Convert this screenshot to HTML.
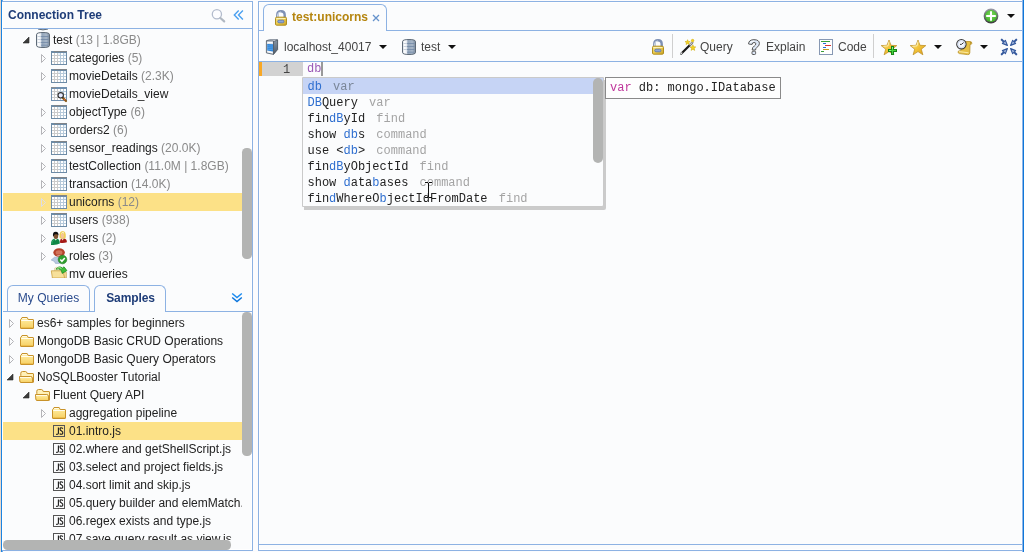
<!DOCTYPE html>
<html><head><meta charset="utf-8">
<style>
*{box-sizing:border-box;margin:0;padding:0}
html,body{width:1024px;height:552px;overflow:hidden;background:#fff;font-family:"Liberation Sans",sans-serif;font-size:12px;color:#222}
.abs{position:absolute}
#bg{left:0;top:0;width:1024px;height:552px;background:#fcfcfe}
#win-l{left:0;top:0;width:3px;height:552px;background:linear-gradient(90deg,#e8d8cc 0,#e8d8cc 1px,#1c84e0 1px,#1c84e0 2px,#6aaae9 2px)}
#win-r{left:1022px;top:0;width:2px;height:552px;background:linear-gradient(90deg,#8fb4e8 0,#8fb4e8 1px,#0f78d8 1px)}
.panel{border:1px solid #8db2e3;background:#fbfcfd;box-shadow:inset 0 0 0 1px #fff}
#lp{left:2px;top:1px;width:251px;height:550px;border-left:none}
#rp{left:258px;top:1px;width:764px;height:550px;border-right:none}
#lp-hline{left:3px;top:28px;width:249px;height:1px;background:#8db2e3}
#lp-title{left:8px;top:8px;font-weight:bold;font-size:12px;color:#1f3d78;white-space:nowrap;line-height:15px}
.clip{position:absolute;overflow:hidden}
.row{position:absolute;left:0;height:18px;width:242px;white-space:nowrap;line-height:18px;font-size:12px;color:#222}
.row.sel{background:#fce187}
.row .t{position:absolute;top:0}
.row .g{color:#8a8a8a}
.tr{position:absolute;top:5px;width:6px;height:10px;background:none}
.row.sel .tr path{stroke:#dcdce6}
.td{position:absolute;top:6px;width:7px;height:7px}
.ico{position:absolute;top:1px;width:16px;height:16px;overflow:visible}
.mono{font-family:"Liberation Mono",monospace}
.sb{position:absolute;background:#b3b4b3;border-radius:4.5px}
.tab{position:absolute;border:1px solid #8db2e3;border-bottom:none;border-radius:6px 6px 0 0;background:#fbfcfd;white-space:nowrap;text-align:center}
</style></head><body>
<svg width="0" height="0" style="position:absolute">
<defs>
<linearGradient id="gdb" x1="0" x2="1" y1="0" y2="0"><stop offset="0" stop-color="#b9c4d0"/><stop offset=".12" stop-color="#ffffff"/><stop offset=".3" stop-color="#eef2f7"/><stop offset=".42" stop-color="#93a5ba"/><stop offset=".75" stop-color="#a9b8c9"/><stop offset="1" stop-color="#7b8b9f"/></linearGradient>
<linearGradient id="gfold" x1="0" x2="0" y1="0" y2="1"><stop offset="0" stop-color="#fff3c0"/><stop offset=".35" stop-color="#fde58f"/><stop offset="1" stop-color="#f6cf63"/></linearGradient>
<linearGradient id="glock" x1="0" x2="1" y1="0" y2="1"><stop offset="0" stop-color="#f7e58a"/><stop offset=".5" stop-color="#e9c94c"/><stop offset="1" stop-color="#c9a227"/></linearGradient>
<linearGradient id="gstar" x1="0" x2="1" y1="0" y2="1"><stop offset="0" stop-color="#fff2a8"/><stop offset=".5" stop-color="#f3c53a"/><stop offset="1" stop-color="#d99a1c"/></linearGradient>
<radialGradient id="gplus" cx=".5" cy=".4" r=".6"><stop offset="0" stop-color="#7fdc5c"/><stop offset="1" stop-color="#3fae2a"/></radialGradient>
<linearGradient id="gsrv" x1="0" x2="0" y1="0" y2="1"><stop offset="0" stop-color="#8796a6"/><stop offset="1" stop-color="#4e5b69"/></linearGradient>
<linearGradient id="gring" x1="0" x2="0" y1="0" y2="1"><stop offset="0" stop-color="#9a9aa8"/><stop offset="1" stop-color="#3c3c3c"/></linearGradient>

<symbol id="i-db" viewBox="0 0 16 16" overflow="visible">
<path d="M1.5 2.6Q1.5 .5 8 .5Q14.5 .5 14.5 2.6V13.4Q14.5 15.5 8 15.5Q1.5 15.5 1.5 13.4Z" fill="url(#gdb)" stroke="#5e6a77"/>
<path d="M6 4.5H13.5M6 7.5H13.5M6 10.5H13.5M6 13.2H13" stroke="#6f86a5" stroke-width="1" opacity=".75"/>
<path d="M2.5 4.5H6M2.5 7.5H6M2.5 10.5H6" stroke="#c9d2dd" stroke-width="1"/>
</symbol>

<symbol id="i-col" viewBox="0 0 16 16" overflow="visible">
<rect x="0" y="1" width="16" height="14" fill="#6d8ba6"/>
<rect x="3" y="1" width="13" height="1" fill="#808488"/>
<rect x="1" y="3" width="14" height="11" fill="#fff"/>
<path d="M3.5 3V14M6.5 3V14M1 5.5H8M1 8.5H8M1 11.5H8" stroke="#cbcbcb"/>
<path d="M9.5 3V14M12.5 3V14M8 5.5H15M8 8.5H15M8 11.5H15" stroke="#b5c9da"/>
<rect x="7" y="3" width="2" height="2" fill="#e4f0fa"/><rect x="13" y="3" width="2" height="2" fill="#e4f0fa"/>
</symbol>

<symbol id="i-view" viewBox="0 0 16 16" overflow="visible">
<rect x="0" y="1" width="16" height="14" fill="#7090b0"/>
<rect x="0" y="1" width="5" height="1" fill="#888c90"/>
<rect x="1" y="3" width="14" height="11" fill="#fff"/>
<path d="M3.5 3V14M6.5 3V14M1 5.5H8M1 8.5H8M1 11.5H8" stroke="#cbcbcb"/>
<path d="M9.5 3V14M12.5 3V14M8 5.5H15M8 8.5H15M8 11.5H15" stroke="#b5c9da"/>
<path d="M11.6 11.6L15 15" stroke="#8a5a18" stroke-width="2.2" stroke-linecap="round"/>
<circle cx="13.6" cy="13.6" r=".8" fill="#e0603a"/>
<circle cx="9.7" cy="9.3" r="2.7" fill="#e6ebff" stroke="#303030" stroke-width="1.1"/>
</symbol>

<symbol id="i-users" viewBox="0 0 16 16" overflow="visible">
<path d="M9 12.8Q8.8 9 10.8 8.5H13.4Q15.9 9 15.9 12.2Q13 13.4 9 12.8Z" fill="#a51a16"/>
<path d="M10.4 8.6L11.6 10.6L12.9 8.6Z" fill="#f6e6d8"/>
<path d="M8.5 7.2Q8 1 11.7 1Q15.2 1 14.8 7Q14.8 8.8 13 8.6H10.2Q8.6 8.8 8.5 7.2Z" fill="#efcf58"/>
<ellipse cx="11.4" cy="5.8" rx="1.6" ry="2.3" fill="#f4c49a"/>
<path d="M10.4 3.4Q11.6 1.4 13 3.2" fill="none" stroke="#fffbe0" stroke-width="1"/>
<path d="M0 14.9Q-.2 9.4 3 8.7H6.2Q8.9 9.3 8.8 13.6Q6 15.3 0 14.9Z" fill="#0f8646"/>
<path d="M0.8 14.2Q0.8 10.4 3.2 9.6" fill="none" stroke="#35b070" stroke-width=".8"/>
<path d="M3.2 8.7L4.7 10.5L6.2 8.7Z" fill="#e8f0e8"/>
<ellipse cx="4.9" cy="6" rx="2.3" ry="2.9" fill="#7d5230"/>
<path d="M2 6.2Q1.4 1.8 4.8 1.8Q7.8 1.8 7.5 5.6Q6.4 3.9 4.8 4.3Q3 4.1 2.6 6.4Z" fill="#101010"/>
</symbol>

<symbol id="i-roles" viewBox="0 0 16 16" overflow="visible">
<path d="M.2 12L3.6 9.2H8.5V15.4H4.4L3.4 13.4Z" fill="#b9c9e0" stroke="#8fa5c4" stroke-width=".6"/>
<ellipse cx="8.1" cy="4.5" rx="5.8" ry="4.3" fill="#b4412b"/>
<ellipse cx="8" cy="4.4" rx="3.4" ry="2.2" fill="#d0735a"/>
<path d="M5 6.4Q8 8.2 11 6.4Q8 9.6 5 6.4Z" fill="#e9c3ae"/>
<circle cx="11.5" cy="11.5" r="4.3" fill="#2f9e2f" stroke="#1f7a1f" stroke-width=".6"/>
<path d="M9.3 11.6L10.9 13.3L13.8 9.9" fill="none" stroke="#fff" stroke-width="1.5"/>
</symbol>

<symbol id="i-myq" viewBox="0 0 16 16" overflow="visible">
<path d="M3.6 5V2.2Q5.6 .4 8.6 2V5Z" fill="#f7f0d2" stroke="#d2c08a" stroke-width=".6"/>
<path d="M12 12V6.2H15.4V12Z" fill="#f3dc96" stroke="#c9a85a" stroke-width=".7"/>
<path d="M1.4 12L.3 4.8H10.6L12.6 7.4L13.6 12Z" fill="#f7e09a" stroke="#c9a040" stroke-width=".8"/>
<path d="M5 3.2Q8 -.8 11.6 2.1L13 .8L15.9 4.6L11.2 7.4L10.4 4.4Q8 2 5 3.2Z" fill="#3fc03a" stroke="#1f8a22" stroke-width=".8"/>
<path d="M6.3 2.3Q8.4 .8 10.4 2.4" fill="none" stroke="#b8f0a0" stroke-width=".9"/>
</symbol>

<symbol id="i-fold" viewBox="0 0 16 16" overflow="visible">
<path d="M.5 13V5Q.5 4.3 1.2 4L2 2.5H7.2L8.2 4.5H13Q13.5 4.5 13.5 5V13Q13.5 13.5 13 13.5H1Q.5 13.5 .5 13Z" fill="url(#gfold)" stroke="#c8922a"/>
<path d="M2.4 3.5H6.8" stroke="#fffbe6"/>
<path d="M1.2 5.5H12.8" stroke="#fffdf0"/>
<path d="M1 12.5H13" stroke="#eec04e"/>
</symbol>

<symbol id="i-fopen" viewBox="0 0 16 16" overflow="visible">
<path d="M.8 6.5V4.2Q.8 2.5 2.5 2.5H5.6Q6.8 2.5 7.2 4.5H13Q13.5 4.5 13.5 5V13.2H.8Z" fill="#fff1b8" stroke="#c8922a"/>
<path d="M-.5 7.5H10.8Q12.3 7.5 12.4 9L12.6 13.5H1Q0 13.5 -.2 12Z" fill="url(#gfold)" stroke="#c8922a"/>
<path d="M0 8.5H11" stroke="#fffbe6"/>
</symbol>

<symbol id="i-js" viewBox="0 0 16 16" overflow="visible">
<rect x="1.5" y="2.5" width="11" height="11" fill="none" stroke="#555" />
<path d="M6.4 4.6V10Q6.4 11.6 4.2 11.4" fill="none" stroke="#1a1a1a" stroke-width="1.1"/>
<path d="M11 5.4Q8 4 8 6Q8 7.3 9.6 8Q11.2 8.8 10.8 10.3Q10 12 7.6 10.8" fill="none" stroke="#1a1a1a" stroke-width="1.1"/>
</symbol>

<symbol id="i-lock" viewBox="0 0 16 16" overflow="visible">
<path d="M4.3 8V5Q4.3 1.2 8 1.2Q11.7 1.2 11.7 5V8" fill="none" stroke="#7d90b4" stroke-width="2.4"/>
<path d="M4.6 8V5Q4.6 2 8 2" fill="none" stroke="#dfe6f2" stroke-width=".9"/>
<rect x="2.5" y="7.2" width="11" height="8" rx="1.2" fill="url(#glock)" stroke="#b18e1d"/>
<path d="M3.5 8.5H12.5" stroke="#fdf3b8"/>
<rect x="4.7" y="10.2" width="6.2" height="2.6" rx="1.3" fill="#8ea6d6" stroke="#5d7bb8" stroke-width=".9"/>
</symbol>

<symbol id="i-server" viewBox="0 0 16 16" overflow="visible">
<path d="M9.5 2.4L13.6 1V10.6L9.5 15.4Z" fill="url(#gsrv)" stroke="#3f4953" stroke-width=".8"/>
<path d="M2.4 1.8L5.6 .5H13.6L9.5 2.4Z" fill="#e9eff7" stroke="#6b7682" stroke-width=".7"/>
<path d="M2.4 1.9H9.5V15.4L2.4 13.9Z" fill="#dfe5ec" stroke="#48525d" stroke-width=".8"/>
<path d="M3.2 5L9 5.2V12.4L3.2 11.4Z" fill="#2b82d8"/>
<path d="M3.2 6.8L9 7.1M3.2 8.6L9 9M3.2 10.2L9 10.8" stroke="#6db4f0" stroke-width=".6"/>
<path d="M3.6 3.5H8.4" stroke="#fff" stroke-width="1.2"/>
<path d="M3.6 12.6L8.4 13.6" stroke="#fff" stroke-width="1"/>
</symbol>

<symbol id="i-wand" viewBox="0 0 16 16" overflow="visible">
<path d="M.9 14.9L12.4 3.6" stroke="#111" stroke-width="2.1"/>
<path d="M.6 15.2L2.3 13.5M9.6 6.4L12.6 3.4" stroke="#fff" stroke-width="1.5"/>
<path d="M.2 15.2L1 16L13.3 3.9L12.5 3.1Z" fill="none" stroke="#333" stroke-width=".5"/>
<path d="M7.6 0.7L8.3 2.4L10.2 2.6L8.7 3.8L9.2 5.6L7.6 4.6L6.0 5.6L6.5 3.8L5.0 2.6L6.9 2.4Z" fill="#f4d21f" stroke="#c9a400" stroke-width=".5"/>
<circle cx="12.6" cy="1.6" r="1.3" fill="#f4d21f" stroke="#c9a400" stroke-width=".5"/>
<path d="M12.9 5.8L13.7 7.8L15.8 7.9L14.2 9.3L14.7 11.4L12.9 10.3L11.1 11.4L11.6 9.3L10.0 7.9L12.1 7.8Z" fill="#f4d21f" stroke="#c9a400" stroke-width=".5"/>
</symbol>

<symbol id="i-q" viewBox="0 0 16 16" overflow="visible">
<path d="M2.6 5Q2.6 .7 8 .7Q13.4 .7 13.4 4.6Q13.4 7 10.6 8.6Q9.6 9.3 9.6 11H6.2Q6 8.4 8.4 6.9Q9.8 6 9.8 4.8Q9.8 3.5 8 3.5Q6.2 3.5 6.1 5.4Z" fill="#dde7f6" stroke="#555" stroke-width="1"/>
<rect x="6" y="12.2" width="3.6" height="3.3" rx="1" fill="#dde7f6" stroke="#555" stroke-width="1"/>
<path d="M4 4.4Q4.6 2 8 2" fill="none" stroke="#fff" stroke-width=".9"/>
</symbol>

<symbol id="i-code" viewBox="0 0 16 16" overflow="visible">
<rect x="1.5" y=".5" width="13" height="15" fill="#fff" stroke="#8798b3"/>
<path d="M3 2.5H12" stroke="#3a9e3a" stroke-width="1"/>
<path d="M5 4.5H8" stroke="#2a6fd6" stroke-width="1"/>
<path d="M7 6.5H13" stroke="#d83434" stroke-width="1"/>
<path d="M5 8.5H8" stroke="#2a6fd6" stroke-width="1"/>
<path d="M5 10.5H11" stroke="#c79a1e" stroke-width="1"/>
<path d="M3 12.5H6" stroke="#3a9e3a" stroke-width="1"/>
</symbol>

<symbol id="i-star" viewBox="0 0 16 16" overflow="visible">
<path d="M8 1L10 6.3L15.8 6.6L11.3 10.2L12.9 15.8L8 12.6L3.1 15.8L4.7 10.2L.2 6.6L6 6.3Z" fill="url(#gstar)" stroke="#b98a1e" stroke-width=".7" stroke-linejoin="round"/>
<path d="M8 2.6L7 6.9L2.6 7.2" fill="none" stroke="#fff6c4" stroke-width=".8"/>
</symbol>

<symbol id="i-starp" viewBox="0 0 16 16" overflow="visible">
<use href="#i-star"/>
<path d="M10 7H13V10H16V13H13V16H10V13H7V10H10Z" fill="#17851a"/>
<path d="M11.5 8V15M8 11.5H15" stroke="#46d63a" stroke-width="1"/>
<path d="M11.5 8V10M8 11.5H10" stroke="#8ef07a" stroke-width="1"/>
</symbol>

<symbol id="i-hist" viewBox="0 0 16 16" overflow="visible">
<path d="M5 2.5H14Q16 2.5 15.8 4.4Q15.6 5.6 14 5.4L13.8 14Q13.6 15.8 11.6 15.6L3.4 14.6Q1.6 14 2.2 12.4Q2.8 11.4 4.4 12L5 11Z" fill="#e6bf45" stroke="#b8902a" stroke-width=".8"/>
<path d="M3 12.6L12.5 13.8" stroke="#fff0b0" stroke-width=".9"/>
<path d="M14 3.2Q15 3.4 14.6 4.6" stroke="#a07a18" stroke-width=".8" fill="none"/>
<circle cx="5.4" cy="5.2" r="4.7" fill="#f4f7fd" stroke="#3b3b3b" stroke-width="1.1"/>
<circle cx="5.4" cy="5.2" r="3.5" fill="none" stroke="#c9d6ee" stroke-width=".8"/>
<path d="M5.4 5.4L7.6 3.6M5.4 5.4H4" stroke="#222" stroke-width=".9"/>
</symbol>

<symbol id="i-coll" viewBox="0 0 16 16" overflow="visible">
<g id="carr"><path d="M.8 .2L3.2 2.6L4.4 1.4L6.4 6.4L1.4 4.4L2.6 3.2L.2 .8Z" fill="#a9bde0" stroke="#34589c" stroke-width="1.15" stroke-linejoin="round"/></g>
<use href="#carr" transform="translate(16,0) scale(-1,1)"/>
<use href="#carr" transform="translate(0,16) scale(1,-1)"/>
<use href="#carr" transform="translate(16,16) scale(-1,-1)"/>
</symbol>

<symbol id="i-plus" viewBox="0 0 16 16" overflow="visible">
<circle cx="8" cy="8" r="7.4" fill="url(#gring)"/>
<circle cx="8" cy="8" r="6" fill="url(#gplus)"/>
<path d="M8 3.2V12.8M3.2 8H12.8" stroke="#fff" stroke-width="2"/>
</symbol>
</defs></svg>
<div id="wrap" style="position:absolute;left:0;top:0;width:1024px;height:552px;will-change:transform">
<div id="bg" class="abs"></div>
<div id="win-l" class="abs"></div>
<div id="lp" class="abs panel"></div>
<div id="lp-hline" class="abs"></div>
<div id="lp-title" class="abs">Connection Tree</div>

<svg class="abs" style="left:210px;top:8px;overflow:visible" width="16" height="16"><circle cx="6.9" cy="6.2" r="4.6" fill="#fdfdff" stroke="#b3bccd" stroke-width="1.3"/><path d="M10.4 10L14.2 13.4" stroke="#b0b8c2" stroke-width="2.2" stroke-linecap="round"/></svg>
<svg class="abs" style="left:233px;top:9px" width="12" height="12"><path d="M5.7 1.4L1.3 5.9L5.7 10.5M9.9 1.4L5.5 5.9L9.9 10.5" fill="none" stroke="#4aa0f0" stroke-width="1.4"/></svg>
<svg class="abs" style="left:231px;top:292px" width="12" height="12"><path d="M1.2 1.5L6 5.5L10.8 1.5" fill="none" stroke="#1c8cf0" stroke-width="1.5"/><path d="M1.2 5.5L6 9.5L10.8 5.5" fill="none" stroke="#0a74dc" stroke-width="1.5"/></svg>
<svg class="abs" style="left:35px;top:29px" width="16" height="2"><path d="M3 0Q8 1.8 13 0" fill="#c5d0dc" stroke="#5e6a77" stroke-width="1"/></svg>

<div class="clip" id="tree1" style="left:3px;top:29px;width:249px;height:249px">
<div style="position:absolute;left:-3px;top:-29px">
<div class="row" style="top:31px"><svg class="td" style="left:23px" width="7" height="7"><path d="M6 0V6H0Z" fill="#3c3c3c" stroke="#2a2a2a" stroke-width=".6"/></svg><svg class="ico" style="left:35px"><use href="#i-db"/></svg><span class="t" style="left:53px">test <span class="g">(13 | 1.8GB)</span></span></div>
<div class="row" style="top:49px"><svg class="tr" style="left:41px" width="6" height="10"><path d="M.5 .5L4.5 4.5L.5 8.5Z" fill="none" stroke="#b4b4b8"/></svg><svg class="ico" style="left:51px"><use href="#i-col"/></svg><span class="t" style="left:69px">categories <span class="g">(5)</span></span></div>
<div class="row" style="top:67px"><svg class="tr" style="left:41px" width="6" height="10"><path d="M.5 .5L4.5 4.5L.5 8.5Z" fill="none" stroke="#b4b4b8"/></svg><svg class="ico" style="left:51px"><use href="#i-col"/></svg><span class="t" style="left:69px">movieDetails <span class="g">(2.3K)</span></span></div>
<div class="row" style="top:85px"><svg class="ico" style="left:51px"><use href="#i-view"/></svg><span class="t" style="left:69px">movieDetails_view</span></div>
<div class="row" style="top:103px"><svg class="tr" style="left:41px" width="6" height="10"><path d="M.5 .5L4.5 4.5L.5 8.5Z" fill="none" stroke="#b4b4b8"/></svg><svg class="ico" style="left:51px"><use href="#i-col"/></svg><span class="t" style="left:69px">objectType <span class="g">(6)</span></span></div>
<div class="row" style="top:121px"><svg class="tr" style="left:41px" width="6" height="10"><path d="M.5 .5L4.5 4.5L.5 8.5Z" fill="none" stroke="#b4b4b8"/></svg><svg class="ico" style="left:51px"><use href="#i-col"/></svg><span class="t" style="left:69px">orders2 <span class="g">(6)</span></span></div>
<div class="row" style="top:139px"><svg class="tr" style="left:41px" width="6" height="10"><path d="M.5 .5L4.5 4.5L.5 8.5Z" fill="none" stroke="#b4b4b8"/></svg><svg class="ico" style="left:51px"><use href="#i-col"/></svg><span class="t" style="left:69px">sensor_readings <span class="g">(20.0K)</span></span></div>
<div class="row" style="top:157px"><svg class="tr" style="left:41px" width="6" height="10"><path d="M.5 .5L4.5 4.5L.5 8.5Z" fill="none" stroke="#b4b4b8"/></svg><svg class="ico" style="left:51px"><use href="#i-col"/></svg><span class="t" style="left:69px">testCollection <span class="g">(11.0M | 1.8GB)</span></span></div>
<div class="row" style="top:175px"><svg class="tr" style="left:41px" width="6" height="10"><path d="M.5 .5L4.5 4.5L.5 8.5Z" fill="none" stroke="#b4b4b8"/></svg><svg class="ico" style="left:51px"><use href="#i-col"/></svg><span class="t" style="left:69px">transaction <span class="g">(14.0K)</span></span></div>
<div class="row sel" style="top:193px"><svg class="tr" style="left:41px" width="6" height="10"><path d="M.5 .5L4.5 4.5L.5 8.5Z" fill="none" stroke="#b4b4b8"/></svg><svg class="ico" style="left:51px"><use href="#i-col"/></svg><span class="t" style="left:69px">unicorns <span class="g">(12)</span></span></div>
<div class="row" style="top:211px"><svg class="tr" style="left:41px" width="6" height="10"><path d="M.5 .5L4.5 4.5L.5 8.5Z" fill="none" stroke="#b4b4b8"/></svg><svg class="ico" style="left:51px"><use href="#i-col"/></svg><span class="t" style="left:69px">users <span class="g">(938)</span></span></div>
<div class="row" style="top:229px"><svg class="tr" style="left:41px" width="6" height="10"><path d="M.5 .5L4.5 4.5L.5 8.5Z" fill="none" stroke="#b4b4b8"/></svg><svg class="ico" style="left:51px"><use href="#i-users"/></svg><span class="t" style="left:69px">users <span class="g">(2)</span></span></div>
<div class="row" style="top:247px"><svg class="tr" style="left:41px" width="6" height="10"><path d="M.5 .5L4.5 4.5L.5 8.5Z" fill="none" stroke="#b4b4b8"/></svg><svg class="ico" style="left:51px"><use href="#i-roles"/></svg><span class="t" style="left:69px">roles <span class="g">(3)</span></span></div>
<div class="row" style="top:265px"><svg class="ico" style="left:51px"><use href="#i-myq"/></svg><span class="t" style="left:69px">my queries</span></div>
</div></div>
<div class="sb" style="left:242px;top:148px;width:10px;height:111px"></div>
<!-- tab strip -->
<div class="abs" style="left:3px;top:311px;width:249px;height:1px;background:#8db2e3"></div>
<div class="tab" style="left:7px;top:285px;width:83px;height:26px;line-height:25px;color:#2a4b8d">My Queries</div>
<div class="tab" style="left:94px;top:285px;width:72px;height:27px;line-height:25px;color:#1f3d78;font-weight:bold;padding-left:1px;letter-spacing:-0.1px">Samples</div>
<div class="clip" id="tree2" style="left:3px;top:312px;width:239px;height:228px">
<div style="position:absolute;left:-3px;top:-312px">
<div class="row" style="top:314px"><svg class="tr" style="left:9px" width="6" height="10"><path d="M.5 .5L4.5 4.5L.5 8.5Z" fill="none" stroke="#b4b4b8"/></svg><svg class="ico" style="left:20px"><use href="#i-fold"/></svg><span class="t" style="left:37px">es6+ samples for beginners</span></div>
<div class="row" style="top:332px"><svg class="tr" style="left:9px" width="6" height="10"><path d="M.5 .5L4.5 4.5L.5 8.5Z" fill="none" stroke="#b4b4b8"/></svg><svg class="ico" style="left:20px"><use href="#i-fold"/></svg><span class="t" style="left:37px">MongoDB Basic CRUD Operations</span></div>
<div class="row" style="top:350px"><svg class="tr" style="left:9px" width="6" height="10"><path d="M.5 .5L4.5 4.5L.5 8.5Z" fill="none" stroke="#b4b4b8"/></svg><svg class="ico" style="left:20px"><use href="#i-fold"/></svg><span class="t" style="left:37px">MongoDB Basic Query Operators</span></div>
<div class="row" style="top:368px"><svg class="td" style="left:7px" width="7" height="7"><path d="M6 0V6H0Z" fill="#3c3c3c" stroke="#2a2a2a" stroke-width=".6"/></svg><svg class="ico" style="left:20px"><use href="#i-fopen"/></svg><span class="t" style="left:37px">NoSQLBooster Tutorial</span></div>
<div class="row" style="top:386px"><svg class="td" style="left:23px" width="7" height="7"><path d="M6 0V6H0Z" fill="#3c3c3c" stroke="#2a2a2a" stroke-width=".6"/></svg><svg class="ico" style="left:36px"><use href="#i-fopen"/></svg><span class="t" style="left:53px">Fluent Query API</span></div>
<div class="row" style="top:404px"><svg class="tr" style="left:41px" width="6" height="10"><path d="M.5 .5L4.5 4.5L.5 8.5Z" fill="none" stroke="#b4b4b8"/></svg><svg class="ico" style="left:52px"><use href="#i-fold"/></svg><span class="t" style="left:69px">aggregation pipeline</span></div>
<div class="row sel" style="top:422px"><svg class="ico" style="left:52px"><use href="#i-js"/></svg><span class="t" style="left:69px">01.intro.js</span></div>
<div class="row" style="top:440px"><svg class="ico" style="left:52px"><use href="#i-js"/></svg><span class="t" style="left:69px">02.where and getShellScript.js</span></div>
<div class="row" style="top:458px"><svg class="ico" style="left:52px"><use href="#i-js"/></svg><span class="t" style="left:69px">03.select and project fields.js</span></div>
<div class="row" style="top:476px"><svg class="ico" style="left:52px"><use href="#i-js"/></svg><span class="t" style="left:69px">04.sort limit and skip.js</span></div>
<div class="row" style="top:494px"><svg class="ico" style="left:52px"><use href="#i-js"/></svg><span class="t" style="left:69px">05.query builder and elemMatch.</span></div>
<div class="row" style="top:512px"><svg class="ico" style="left:52px"><use href="#i-js"/></svg><span class="t" style="left:69px">06.regex exists and type.js</span></div>
<div class="row" style="top:530px"><svg class="ico" style="left:52px"><use href="#i-js"/></svg><span class="t" style="left:69px">07.save query result as view.js</span></div>
</div></div>
<div class="sb" style="left:242px;top:312px;width:10px;height:144px"></div>
<div class="sb" style="left:3px;top:540px;width:228px;height:10px"></div>
<!--RIGHT-->
<div id="rp" class="abs panel"></div>
<style>
.tbt{position:absolute;top:40px;line-height:14px;font-size:12px;color:#444;white-space:nowrap}
.dar{position:absolute;width:0;height:0;border-left:4px solid transparent;border-right:4px solid transparent;border-top:4px solid #111}
.sep{position:absolute;top:34px;width:1px;height:24px;background:#cfcfcf}
.tico{position:absolute;width:16px;height:16px;overflow:visible}
#ac{left:302px;top:77px;width:302px;height:130px;border:1px solid #cacaca;background:#fbfcfd;box-shadow:2px 3px 0 #cbcbcb;border-radius:0 0 2px 0;overflow:hidden}
#ac .it{position:absolute;left:0;width:300px;height:16px;line-height:18px;padding-left:4.5px;font-family:"Liberation Mono",monospace;font-size:12px;color:#222;white-space:pre}
#ac .it.sel{background:#c6d4f5}
#ac .it b{font-weight:normal;color:#2f6fd0}
#ac .it .m{color:#a4a4a4;margin-left:4px}
#ac .it.sel .m{color:#7a8698}
</style>
<div class="abs" style="left:259px;top:30px;width:763px;height:1px;background:#8db2e3"></div>
<div class="tab" style="left:263px;top:4px;width:124px;height:27px"></div>
<svg class="tico" style="left:273px;top:10px"><use href="#i-lock"/></svg>
<div class="abs" style="left:292px;top:10px;line-height:15px;font-size:12px;font-weight:bold;color:#b5850f;white-space:nowrap">test:unicorns</div>
<svg class="abs" style="left:372px;top:14px" width="8" height="8"><path d="M1 1L7 7M7 1L1 7" stroke="#6593cc" stroke-width="1.3"/></svg>
<svg class="tico" style="left:983px;top:8px"><use href="#i-plus"/></svg>
<div class="dar" style="left:1007px;top:14px"></div>
<!-- toolbar -->
<div class="abs" style="left:259px;top:61px;width:763px;height:1px;background:#8db2e3"></div>
<svg class="tico" style="left:264px;top:39px"><use href="#i-server"/></svg>
<div class="tbt" style="left:284px">localhost_40017</div>
<div class="dar" style="left:379px;top:45px"></div>
<svg class="tico" style="left:401px;top:39px"><use href="#i-db"/></svg>
<div class="tbt" style="left:421px">test</div>
<div class="dar" style="left:448px;top:45px"></div>
<svg class="tico" style="left:650px;top:39px"><use href="#i-lock"/></svg>
<div class="sep" style="left:672px"></div>
<svg class="tico" style="left:680px;top:39px"><use href="#i-wand"/></svg>
<div class="tbt" style="left:700px">Query</div>
<svg class="tico" style="left:746px;top:39px"><use href="#i-q"/></svg>
<div class="tbt" style="left:766px">Explain</div>
<svg class="tico" style="left:818px;top:39px"><use href="#i-code"/></svg>
<div class="tbt" style="left:838px">Code</div>
<div class="sep" style="left:873px"></div>
<svg class="tico" style="left:881px;top:39px"><use href="#i-starp"/></svg>
<svg class="tico" style="left:910px;top:39px"><use href="#i-star"/></svg>
<div class="dar" style="left:934px;top:45px"></div>
<svg class="tico" style="left:956px;top:39px"><use href="#i-hist"/></svg>
<div class="dar" style="left:980px;top:45px"></div>
<svg class="tico" style="left:1001px;top:39px"><use href="#i-coll"/></svg>
<div class="abs" style="left:259px;top:544px;width:763px;height:1px;background:#8db2e3"></div>
<!-- editor -->
<div class="abs" style="left:259px;top:62px;width:3px;height:14px;background:#f9a825"></div>
<div class="abs" style="left:262px;top:62px;width:41px;height:14px;background:#d2d2d2"></div>
<div class="abs mono" style="left:283px;top:63px;line-height:14px;font-size:12px;color:#444">1</div>
<div class="abs mono" style="left:307px;top:62px;line-height:14px;font-size:12px;color:#9b59b6">db</div>
<div class="abs" style="left:321px;top:62px;width:2px;height:14px;background:#999"></div>
<div id="ac" class="abs">
<div class="it sel" style="top:0px"><b>db</b><span class="m">&nbsp;var</span></div>
<div class="it" style="top:16px"><b>DB</b>Query<span class="m">&nbsp;var</span></div>
<div class="it" style="top:32px">fin<b>dB</b>yId<span class="m">&nbsp;find</span></div>
<div class="it" style="top:48px">show <b>db</b>s<span class="m">&nbsp;command</span></div>
<div class="it" style="top:64px">use &lt;<b>db</b>&gt;<span class="m">&nbsp;command</span></div>
<div class="it" style="top:80px">fin<b>dB</b>yObjectId<span class="m">&nbsp;find</span></div>
<div class="it" style="top:96px">show <b>d</b>ata<b>b</b>ases<span class="m">&nbsp;command</span></div>
<div class="it" style="top:112px">fin<b>d</b>WhereO<b>b</b>jectIdFromDate<span class="m">&nbsp;find</span></div>
<div class="sb" style="left:290px;top:0px;width:10px;height:85px;border-radius:5px"></div>
</div>
<div class="abs mono" style="left:605px;top:77px;width:176px;height:22px;border:1px solid #8a8a8a;background:#fefefe;line-height:20px;font-size:12px;padding-left:4px;color:#222;white-space:pre"><span style="color:#c0389c">var</span> db: mongo.IDatabase</div>
<!-- I-beam cursor -->
<svg class="abs" style="left:425px;top:182px" width="8" height="16"><path d="M0 .5H3M4 .5H7M3.5 1V15M0 15.5H3M4 15.5H7" fill="none" stroke="#111" stroke-width="1"/></svg>

<div id="win-r" class="abs"></div>
</div>
</body></html>
